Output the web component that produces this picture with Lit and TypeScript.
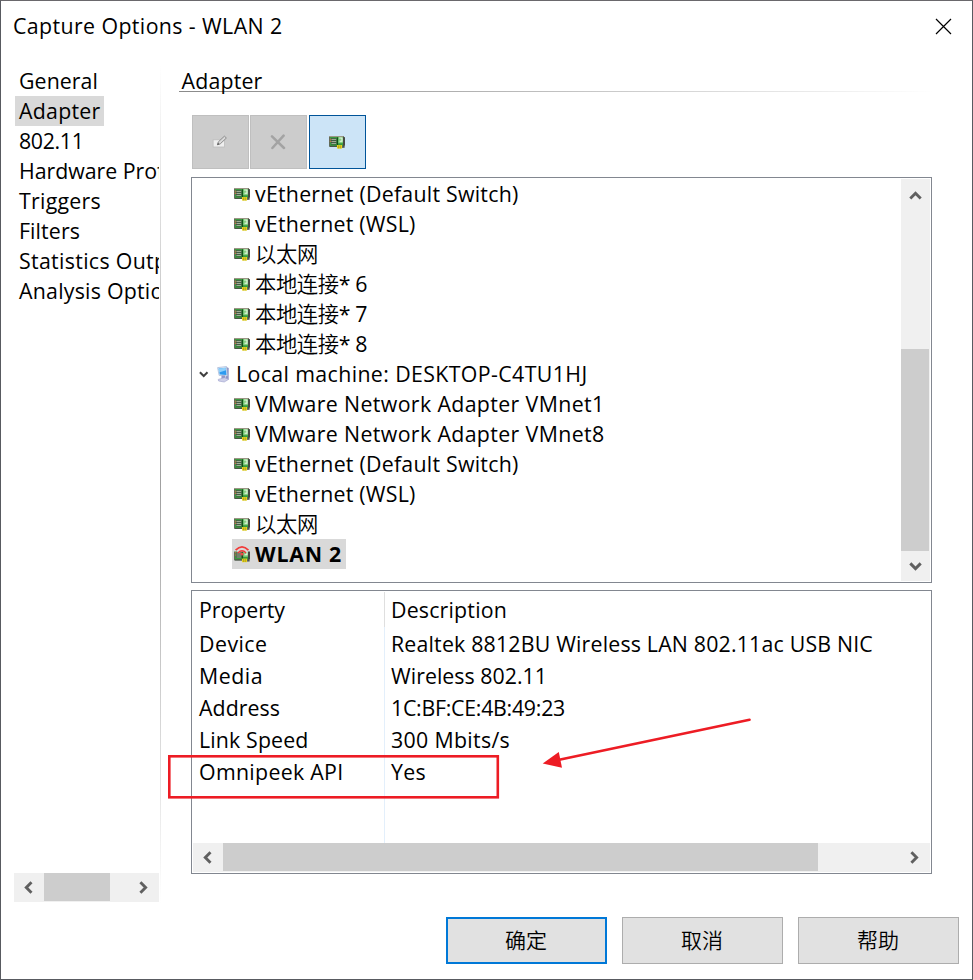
import { LitElement, html, svg, css } from "lit";
import { customElement, property } from "lit/decorators.js";
import { classMap } from "lit/directives/class-map.js";

const FAMILY = '"Open Sans", "Noto Sans CJK SC", sans-serif';
const SIZE = 21.33;
const pen = document.createElement("canvas").getContext("2d")!;

/** Letter spacing that makes `text` advance by `width` pixels. */
function tracking(text: string, width: number, bold = false): number {
  pen.font = `${bold ? 700 : 400} ${SIZE}px ${FAMILY}`;
  return (width - pen.measureText(text).width) / [...text].length;
}

/** Han characters are set in a lighter cut than the Latin text beside them. */
function label(text: string, width: number, bold = false, measured = text) {
  const han = text.match(/^[\u4e00-\u9fff]+/)?.[0] ?? "";
  const rest = text.slice(han.length);
  return html`<span style="letter-spacing:${tracking(measured, width, bold).toFixed(3)}px">${han ? html`<i class="han">${han}</i>` : ""}${rest}</span>`;
}

const board = svg`
  <rect x="0" y="1" width="15" height="10.8" fill="#5f6b5a"/>
  <rect x="0" y="1" width="14.5" height="1" fill="#9c9686"/>
  <rect x="1" y="2" width="13.5" height="8.8" fill="#3a9a3f"/>
  <rect x="14" y="2" width="2" height="8.8" rx=".6" fill="#454943"/>
  <rect x="2" y="3.2" width="5.6" height="6.2" fill="#3a4f3b"/>
  <path d="M2.4 4.4h4.8M2.4 6.4h4.8M2.4 8.4h4.8" stroke="#b3c4ac" stroke-width=".9"/>
  <path d="M.8 4.2h1.4M.8 6.4h1.4" stroke="#d0674a" stroke-width="1.1"/>
  <rect x="9.2" y="2.2" width="4.6" height="6" fill="#84cf80"/>
  <path d="M10.2 3h2.8v3.2h-2.4" fill="none" stroke="#ecf8e8" stroke-width="1.1"/>
  <path d="M8.5 2.4v8" stroke="#12501a" stroke-width="1.1"/>
  <path d="M1 11.4h7" stroke="#454f40" stroke-width="1"/>
  <rect x="8" y="10" width="5" height="3.6" fill="#e6d31e"/>
  <path d="M9.6 10.4v3M11.3 10.4v3" stroke="#93861c" stroke-width=".6"/>
  <path d="M13 12.2h2v-1.6" fill="none" stroke="#454943" stroke-width="1.2"/>`;

const nic = html`<svg width="16" height="14" viewBox="0 0 16 14">${board}</svg>`;

const wirelessNic = html`<svg width="16" height="18" viewBox="0 0 16 18">
  <g transform="translate(0 3.6)">${board}</g>
  <path d="M0 0h16v6.4h-3L11.4 8Q8 5 4.8 8L3 6.4H0z" fill="#d9d9d9"/>
  <path d="M1.6 5.2Q8-1.6 14.4 5.2" fill="none" stroke="#f23a38" stroke-width="1.7"/>
  <path d="M4 8Q8 3.6 12 8" fill="none" stroke="#f23a38" stroke-width="1.6"/>
  <circle cx="8" cy="9" r="1.6" fill="#ee4a48"/>
</svg>`;

const computer = html`<svg width="14" height="17" viewBox="0 0 14 17">
  <path d="M9.3 1l2.4 1v11l-3 1.5z" fill="#8f94c4"/>
  <path d="M.6 1.6L9.5.5l.9 9.5-8.3-.6z" fill="#e3ecf7" stroke="#a3b4d6" stroke-width=".7"/>
  <path d="M1.6 2.4l7.2-.7.7 7.2-6.8-.5z" fill="#2d9af0"/>
  <path d="M1.6 2.4l7.2-.7.2 2.6-7 2.2z" fill="#8fd0fb"/>
  <path d="M4.5 9.6h3.6l.6 3.2H4.4z" fill="#9296c6"/>
  <path d="M1.2 13.4l6.2-1.7 4.4 1.6-4.6 2.7-5.6-1z" fill="#cdcfe8" stroke="#9ea1cc" stroke-width=".6"/>
</svg>`;

const expander = html`<svg width="10" height="8">
  <path d="M.9 2.2l3.8 3.8 3.8-3.8" fill="none" stroke="#404040" stroke-width="2"/>
</svg>`;

const pencil = html`<svg width="16" height="14" viewBox="0 0 16 14">
  <rect x="1.1" y="4.8" width="11.4" height="7.2" fill="#efefef" stroke="#bcbcbc" stroke-width=".8"/>
  <path d="M5.4 9.8l.9-2.9L12.4 1.2l2 1.8-6.1 5.8z" fill="#d9d9d9" stroke="#8c8c8c" stroke-width="1"/>
  <path d="M5.2 10l.8-2.2 1.5 1.5z" fill="#555"/>
</svg>`;

const cross = html`<svg width="16" height="16" viewBox="0 0 16 16">
  <path d="M2 2.4L14 14M13.6 1.7L2.4 14" stroke="#a3a3a3" stroke-width="2.5" stroke-linecap="round"/>
</svg>`;

@customElement("scroll-bar")
class ScrollBar extends LitElement {
  @property({ type: Boolean, reflect: true }) vertical = false;
  @property({ type: Number }) before = 0;
  @property({ type: Number }) thumb = 0;

  static styles = css`
    :host { display: flex; background: #f0f0f0; height: 29px; flex: none; }
    :host([vertical]) { flex-direction: column; width: 29px; height: auto; }
    svg { flex: none; display: block; }
    .gap { flex: none; }
    .thumb { flex: none; background: #cdcdcd; margin-bottom: 1px; }
    :host([vertical]) .thumb { margin: 0 1px 0 0; }
    .rest { flex: 1; }
    path { fill: none; stroke: #606060; stroke-width: 2.9; }
  `;

  render() {
    const v = this.vertical;
    const axis = v ? "height" : "width";
    return html`
      <svg width=${v ? 29 : 30} height=${v ? 30 : 29}>
        <path d=${v ? "M9.3 19.5l5.2-5.2 5.2 5.2" : "M17.5 9.3l-5.2 5.2 5.2 5.2"}></path>
      </svg>
      <div class="gap" style="${axis}:${this.before}px"></div>
      <div class="thumb" style="${axis}:${this.thumb}px"></div>
      <div class="rest"></div>
      <svg width=${v ? 29 : 30} height=${v ? 30 : 29}>
        <path d=${v ? "M9.3 12.4l5.2 5.2 5.2-5.2" : "M11.4 9.3l5.2 5.2-5.2 5.2"}></path>
      </svg>`;
  }
}

interface Page { text: string; width: number; measured?: string }
const pages: Page[] = [
  { text: "General", width: 79 },
  { text: "Adapter", width: 81.5 },
  { text: "802.11", width: 64.5 },
  { text: "Hardware Profiles", width: 138, measured: "Hardware Pro" },
  { text: "Triggers", width: 82 },
  { text: "Filters", width: 61 },
  { text: "Statistics Output", width: 135, measured: "Statistics Out" },
  { text: "Analysis Options", width: 131.5, measured: "Analysis Opti" },
];

interface Node { text: string; width: number; kind?: "machine" | "wlan" }
const nodes: Node[] = [
  { text: "vEthernet (Default Switch)", width: 263.5 },
  { text: "vEthernet (WSL)", width: 160.5 },
  { text: "以太网", width: 63 },
  { text: "本地连接* 6", width: 112 },
  { text: "本地连接* 7", width: 112 },
  { text: "本地连接* 8", width: 112 },
  { text: "Local machine: DESKTOP-C4TU1HJ", width: 351.5, kind: "machine" },
  { text: "VMware Network Adapter VMnet1", width: 349.5 },
  { text: "VMware Network Adapter VMnet8", width: 349.5 },
  { text: "vEthernet (Default Switch)", width: 263.5 },
  { text: "vEthernet (WSL)", width: 160.5 },
  { text: "以太网", width: 63 },
  { text: "WLAN 2", width: 87, kind: "wlan" },
];

const details: [string, number, string, number][] = [
  ["Device", 68.5, "Realtek 8812BU Wireless LAN 802.11ac USB NIC", 482],
  ["Media", 64, "Wireless 802.11", 156],
  ["Address", 81, "1C:BF:CE:4B:49:23", 174],
  ["Link Speed", 109.5, "300 Mbits/s", 119],
  ["Omnipeek API", 144.5, "Yes", 35],
];

@customElement("app-root")
class AppRoot extends LitElement {
  static styles = css`
    :host {
      display: block; position: relative; box-sizing: border-box;
      width: 973px; height: 980px; overflow: hidden;
      border: 1px solid #585a60; border-top-color: #6a686c; background: #fff; color: #000;
      font: 21.33px/30px "Open Sans", "Noto Sans CJK SC", sans-serif;
      white-space: nowrap;
    }
    * { box-sizing: border-box; }
    svg { display: block; flex: none; }
    .han { font-style: normal; font-weight: 350; }
    header { display: flex; justify-content: space-between; height: 64px; padding: 10px 20px 0 12px; }
    .close { margin-top: 7px; }
    .body { display: grid; grid-template-columns: 158px 1px 1fr; height: 838px; }
    nav { display: flex; flex-direction: column; padding: 1px 0 1px 13px; overflow: hidden; }
    .page { height: 30px; align-self: flex-start; padding: 0 4px 0 5px; }
    .page.on { background: #d9d9d9; width: 89px; margin-left: 1px; padding-left: 4px; }
    .push { flex: 1; }
    .rule { background: linear-gradient(#fff, #a0a0a0 50%, #fff); margin-left: 1px; width: 1px; }
    main { display: flex; flex-direction: column; padding: 1px 40px 0 31px; }
    .title { height: 26px; margin: 0 0 0 -12px; width: 755px; padding-left: 2.5px;
      background: linear-gradient(90deg, #8a8a8a, #a8a8a8 30%, #fff) 0 25px / 100% 1px no-repeat; }
    .tools { display: flex; margin: 23px 0 8px 1px; gap: 1px; }
    .tool { width: 57px; height: 54px; background: #ccc; border: 1px solid #bfbfbf; padding-right: 1px;
      display: flex; align-items: center; justify-content: center; }
    .tool.on { background: #cce4f7; border-color: #005499; margin-left: 1px; }
    .box { border: 1px solid #828790; width: 741px; flex: none; }
    .tree { height: 406px; display: flex; justify-content: space-between; padding: 1px; }
    .node { display: flex; height: 30px; margin-left: 39px; padding: 0 5px 0 2px; align-items: center; width: max-content; }
    .node span { margin-left: 5px; }
    .node.machine { margin-left: 4px; }
    .node.machine .pc { display: flex; margin: 0 0 0 8px; }
    .node.wlan { background: #d9d9d9; font-weight: 700; width: 114px; }
    .props { height: 284px; margin-top: 7px; display: flex; flex-direction: column; padding: 1px; }
    .grid { flex: 1; display: grid; grid-template-columns: 192px 1fr; grid-template-rows: 35px repeat(5, 32px) 1fr;
      background: linear-gradient(#dfdfdf 35px, #e3effb 35px) 191px 0 / 1px 100% no-repeat; }
    .grid > div { padding-left: 6px; padding-top: 2px; }
    .grid > .head { padding-top: 3px; }
    footer { display: flex; justify-content: flex-end; gap: 15px; padding: 14px 13px 0 0; }
    button { width: 161px; height: 47px; border: 1px solid #adadad; background: #e1e1e1; padding: 0 1px 3px 0; color: #000;
      font: 350 21px/30px "Noto Sans CJK SC", sans-serif; }
    button.ok { border: 2px solid #0078d7; }
    .note { position: absolute; left: -1px; top: -1px; pointer-events: none; }
  `;

  private node({ text, width, kind }: Node) {
    const machine = kind === "machine";
    const wlan = kind === "wlan";
    const icon = machine ? html`${expander}<div class="pc">${computer}</div>` : wlan ? wirelessNic : nic;
    return html`<div class=${classMap({ node: true, machine, wlan })}>${icon}${label(text, width, wlan)}</div>`;
  }

  render() {
    return html`
      <header>${label("Capture Options - WLAN 2", 269.5)}
        <svg class="close" width="17" height="17"><path d="M1 1l15 15M16 1L1 16" stroke="#000" stroke-width="1.2"/></svg></header>
      <div class="body">
        <nav>
          ${pages.map((p) => html`<div class=${classMap({ page: true, on: p.text === "Adapter" })}>${label(p.text, p.width, false, p.measured)}</div>`)}
          <div class="push"></div>
          <scroll-bar .before=${0} .thumb=${66}></scroll-bar>
        </nav>
        <div class="rule"></div>
        <main>
          <div class="title">${label("Adapter", 81)}</div>
          <div class="tools">
            <div class="tool">${pencil}</div>
            <div class="tool">${cross}</div>
            <div class="tool on">${nic}</div>
          </div>
          <div class="box tree">
            <div>${nodes.map((n) => this.node(n))}</div>
            <scroll-bar vertical .before=${140} .thumb=${202}></scroll-bar>
          </div>
          <div class="box props">
            <div class="grid">
              <div class="head">${label("Property", 86)}</div><div class="head">${label("Description", 116)}</div>
              ${details.map(([k, kw, v, vw]) => html`<div>${label(k, kw)}</div><div>${label(v, vw)}</div>`)}
            </div>
            <scroll-bar .before=${0} .thumb=${595}></scroll-bar>
          </div>
        </main>
      </div>
      <footer><button class="ok">确定</button><button>取消</button><button>帮助</button></footer>
      <svg class="note" width="973" height="980">
        <rect x="169.3" y="756.3" width="328.5" height="41" fill="none" stroke="#ed1c24" stroke-width="2.6"/>
        <path d="M749.5 719.8L558 760" stroke="#ed1c24" stroke-width="2.7" stroke-linecap="round"/>
        <path d="M542.7 763.6L558.8 752l3.2 15.8z" fill="#ed1c24"/>
      </svg>`;
  }
}
